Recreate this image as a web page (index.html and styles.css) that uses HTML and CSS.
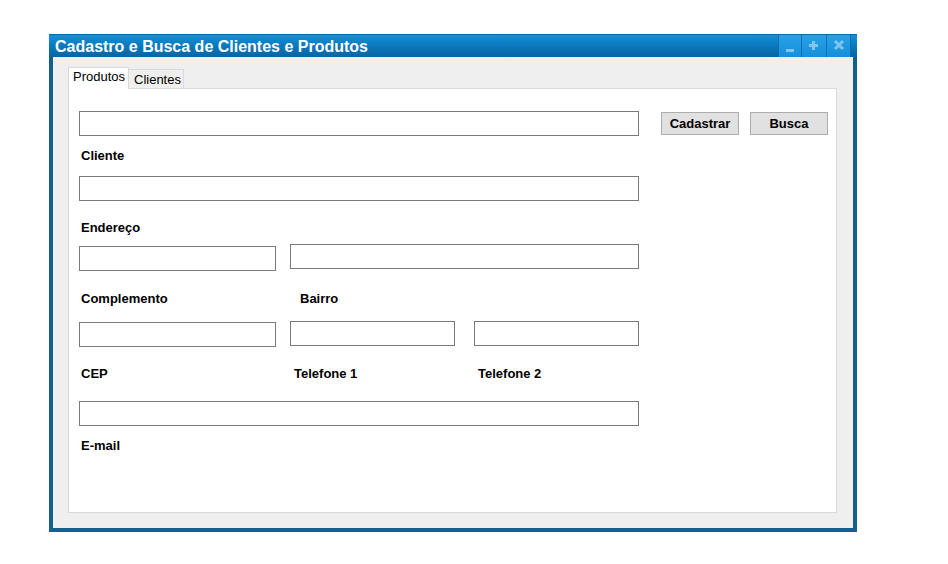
FILE: index.html
```html
<!DOCTYPE html>
<html lang="pt">
<head>
<meta charset="utf-8">
<title>Cadastro e Busca de Clientes e Produtos</title>
<link rel="stylesheet" href="styles.css">
</head>
<body>
<div class="window">
  <div class="titlebar">
    <span class="title">Cadastro e Busca de Clientes e Produtos</span>
    <div class="wbtns">
      <span class="wbtn"><svg width="22" height="22" viewBox="0 0 22 22"><rect x="7" y="14" width="8" height="3" fill="#82c4ea"/></svg></span>
      <span class="wbtn"><svg width="24" height="22" viewBox="0 0 24 22"><rect x="7" y="9" width="9" height="3" fill="#82c4ea"/><rect x="10" y="6" width="3" height="9" fill="#82c4ea"/></svg></span>
      <span class="wbtn"><svg width="23" height="22" viewBox="0 0 23 22"><path d="M8 6 L16 14 M16 6 L8 14" stroke="#82c4ea" stroke-width="3"/></svg></span>
    </div>
  </div>
  <div class="body">
    <div class="tabs">
      <span class="tab active">Produtos</span>
      <span class="tab">Clientes</span>
    </div>
    <div class="panel">
      <div class="row r1">
        <div class="field w560"></div>
        <button class="btn b-cad">Cadastrar</button>
        <button class="btn b-bus">Busca</button>
      </div>
      <div class="label l-cliente">Cliente</div>
      <div class="field w560 f2"></div>
      <div class="label l-end">Endereço</div>
      <div class="row r3">
        <div class="field w197 down2"></div>
        <div class="field w349 gap14"></div>
      </div>
      <div class="row lrow l-comp">
        <div class="label c1">Complemento</div>
        <div class="label c2 pad10">Bairro</div>
      </div>
      <div class="row r4">
        <div class="field w197 down1"></div>
        <div class="field w165 gap14"></div>
        <div class="field w165 gap19"></div>
      </div>
      <div class="row lrow l-cep">
        <div class="label c1">CEP</div>
        <div class="label c3 pad4">Telefone 1</div>
        <div class="label pad4">Telefone 2</div>
      </div>
      <div class="field w560 f5"></div>
      <div class="label l-mail">E-mail</div>
    </div>
  </div>
</div>
</body>
</html>
```
FILE: styles.css
```css
* { box-sizing: border-box; }
html, body { margin: 0; padding: 0; background: #ffffff; }
body { font-family: "Liberation Sans", Arial, sans-serif; }

.window {
  width: 808px;
  height: 498px;
  margin: 34px 0 0 49px;
  background: #12618a;
  padding: 0 4px 4px 4px;
  display: flex;
  flex-direction: column;
}

.titlebar {
  height: 23px;
  margin: 0 -4px;
  background: linear-gradient(to bottom, #1290da 0%, #0a79bd 50%, #0a64a2 100%);
  border-top: 1px solid #0d6aa3;
  display: flex;
  align-items: center;
  justify-content: space-between;
  color: #ffffff;
}
.title {
  font-weight: bold;
  font-size: 16px;
  line-height: 20px;
  padding-left: 6px;
  margin-top: 1px;
}
.wbtns {
  display: flex;
  align-self: flex-start;
  margin-right: 6px;
  height: 22px;
}
.wbtn {
  display: block;
  height: 22px;
  background: linear-gradient(to bottom, #25a2ea 0%, #168fd8 100%);
  border-left: 1px solid #0d6fae;
}
.wbtn svg { display: block; }
.wbtns .wbtn:last-child { border-right: 1px solid #0d6fae; }

.body {
  flex: 1;
  background: #efefef;
  padding: 10px 16px 15px 15px;
  display: flex;
  flex-direction: column;
}

.tabs {
  display: flex;
  align-items: flex-end;
  height: 21px;
  position: relative;
  z-index: 1;
}
.tab {
  font-size: 13px;
  color: #000;
  border: 1px solid #d9d9d9;
  border-bottom: none;
  border-left: none;
  background: #efefef;
  height: 19px;
  line-height: 17px;
  padding: 1px 4px 0 5px;
  width: 55px;
}
.tab.active {
  background: #ffffff;
  height: 22px;
  margin-bottom: -1px;
  border-left: 1px solid #d9d9d9;
  width: 61px;
  padding: 1px 4px 0 4px;
  line-height: 16px;
}

.panel {
  flex: 1;
  background: #ffffff;
  border: 1px solid #d9d9d9;
  padding: 22px 0 0 10px;
  display: flex;
  flex-direction: column;
  align-items: flex-start;
}

.row { display: flex; align-items: flex-start; }

.field {
  height: 25px;
  border: 1px solid #7a7a7a;
  background: #ffffff;
}
.w560 { width: 560px; }
.w349 { width: 349px; }
.w197 { width: 197px; }
.w165 { width: 165px; }
.gap14 { margin-left: 14px; }
.gap19 { margin-left: 19px; }
.down2 { margin-top: 2px; }
.down1 { margin-top: 1px; }

.btn {
  font-family: "Liberation Sans", Arial, sans-serif;
  font-weight: bold;
  font-size: 13px;
  color: #000;
  height: 23px;
  width: 78px;
  margin-top: 1px;
  background: #e1e1e1;
  border: 1px solid #adadad;
  padding: 0;
}
.b-cad { margin-left: 22px; }
.b-bus { margin-left: 11px; }

.label {
  font-weight: bold;
  font-size: 13px;
  line-height: 15px;
  height: 15px;
  color: #000;
  padding-left: 2px;
}
.l-cliente { margin-top: 12px; }
.f2 { margin-top: 13px; }
.l-end { margin-top: 19px; }
.r3 { margin-top: 9px; }
.l-comp { margin-top: 20px; }
.r4 { margin-top: 15px; }
.l-cep { margin-top: 19px; }
.f5 { margin-top: 20px; }
.l-mail { margin-top: 12px; }

.lrow .label { padding-left: 2px; }
.lrow .c1 { width: 211px; }
.lrow .c3 { width: 184px; }
.lrow .pad10 { padding-left: 10px; }
.lrow .pad4 { padding-left: 4px; }
```
